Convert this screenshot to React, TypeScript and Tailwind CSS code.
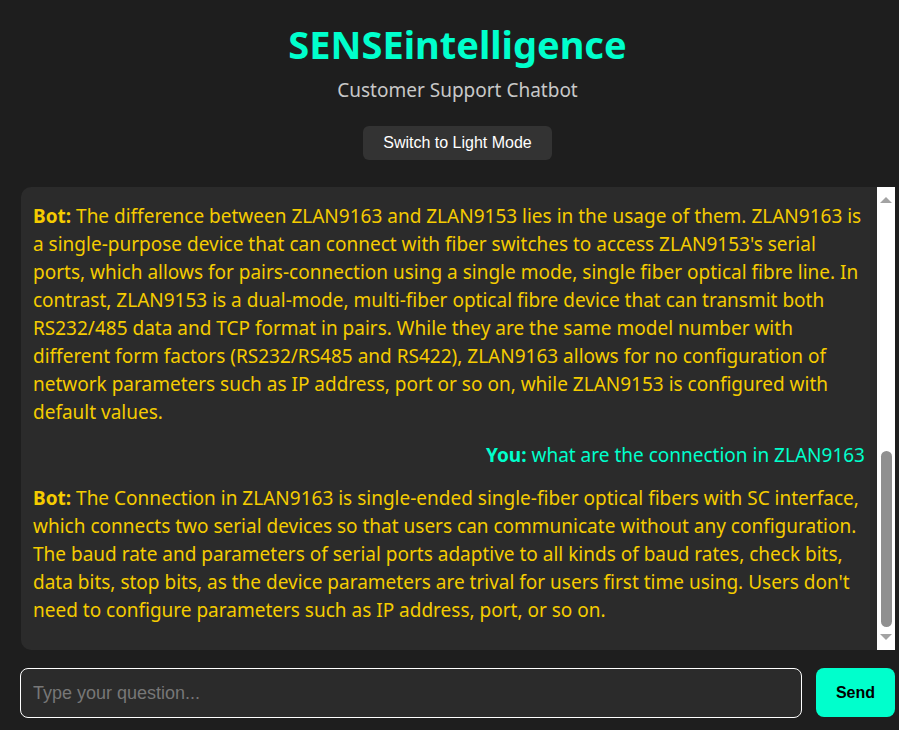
import { useEffect, useRef } from "react";

type Message = { from: "bot" | "you"; text: string };

const messages: Message[] = [
  {
    from: "bot",
    text: "Hello! I'm the SENSEintelligence assistant. Ask me anything about our serial servers, fiber converters and IoT gateways.",
  },
  { from: "you", text: "what is ZLAN9163" },
  {
    from: "bot",
    text: "ZLAN9163 is a serial to fiber converter that allows RS232/485/422 devices to communicate over single-mode single-fiber optical lines. It requires no configuration and supports all common baud rates, making it suitable for long-distance, interference-free industrial links.",
  },
  { from: "you", text: "what is the difference between ZLAN9163 and ZLAN9153" },
  {
    from: "bot",
    text: "The difference between ZLAN9163 and ZLAN9153 lies in the usage of them. ZLAN9163 is a single-purpose device that can connect with fiber switches to access ZLAN9153's serial ports, which allows for pairs-connection using a single mode, single fiber optical fibre line. In contrast, ZLAN9153 is a dual-mode, multi-fiber optical fibre device that can transmit both RS232/485 data and TCP format in pairs. While they are the same model number with different form factors (RS232/RS485 and RS422), ZLAN9163 allows for no configuration of network parameters such as IP address, port or so on, while ZLAN9153 is configured with default values.",
  },
  { from: "you", text: "what are the connection in ZLAN9163" },
  {
    from: "bot",
    text: "The Connection in ZLAN9163 is single-ended single-fiber optical fibers with SC interface, which connects two serial devices so that users can communicate without any configuration. The baud rate and parameters of serial ports adaptive to all kinds of baud rates, check bits, data bits, stop bits, as the device parameters are trival for users first time using. Users don't need to configure parameters such as IP address, port, or so on.",
  },
];

// Headless browser hides native scrollbars, so draw the classic one by hand.
const FakeScrollbar = () => (
  <div aria-hidden className="flex w-[18px] shrink-0 flex-col items-center bg-white">
    <div className="flex h-[16px] items-end justify-center">
      <div className="h-0 w-0 border-x-[6px] border-b-[6px] border-x-transparent border-b-[#a3a3a3]" />
    </div>
    <div className="flex flex-1 flex-col justify-end pb-[6px] pt-[2px]">
      <div className="h-[176px] w-[11px] rounded-full bg-[#909090]" />
    </div>
    <div className="flex h-[17px] items-start justify-center pt-[1px]">
      <div className="h-0 w-0 border-x-[6px] border-t-[6px] border-x-transparent border-t-[#a3a3a3]" />
    </div>
  </div>
);

const App = () => {
  const chatRef = useRef<HTMLDivElement>(null);

  useEffect(() => {
    if (chatRef.current) {
      chatRef.current.scrollTop = chatRef.current.scrollHeight;
    }
  }, []);

  return (
    <div className="min-h-[730px] bg-[#1e1e1e] pl-5 pr-1 font-['Noto_Sans',sans-serif]">
      <header className="flex flex-col items-center pt-[18px]">
        <h1 className="text-[38px] font-bold leading-[52px] text-[#00ffcc]">
          SENSEintelligence
        </h1>
        <p className="mt-[7px] text-[19px] leading-[26px] text-[#c8c8c8]">
          Customer Support Chatbot
        </p>
        <button className="mt-[23px] h-[34px] rounded-md bg-[#333333] px-[20px] font-['Liberation_Sans',sans-serif] text-[16px] text-white">
          Switch to Light Mode
        </button>
      </header>

      <div className="mt-[27px] ml-[1px] flex h-[463px] overflow-hidden rounded-l-[10px] bg-[#2b2b2b]">
        <div
          ref={chatRef}
          className="flex-1 overflow-y-scroll px-3 pt-3 pb-[11px] [scrollbar-width:none]"
        >
          {messages.map((m, i) =>
            m.from === "bot" ? (
              <p key={i} className="mb-[15px] text-[19px] leading-[28px] text-[#f5cc00]">
                <strong className="font-bold">Bot:</strong> {m.text}
              </p>
            ) : (
              <p key={i} className="mb-[15px] text-right text-[19px] leading-[28px] text-[#00ffcc]">
                <strong className="font-bold">You:</strong> {m.text}
              </p>
            )
          )}
        </div>
        <FakeScrollbar />
      </div>

      <div className="mt-[18px] flex gap-[14px]">
        <input
          placeholder="Type your question..."
          className="h-[50px] flex-1 rounded-lg border-[1.5px] border-white bg-[#2b2b2b] px-3 font-['Liberation_Sans',sans-serif] text-[18px] text-white placeholder:text-[#777777] outline-none"
        />
        <button className="h-[49px] w-[79px] rounded-lg bg-[#00ffcc] font-['Liberation_Sans',sans-serif] text-[16px] font-bold text-black">
          Send
        </button>
      </div>
    </div>
  );
};

export default App;
